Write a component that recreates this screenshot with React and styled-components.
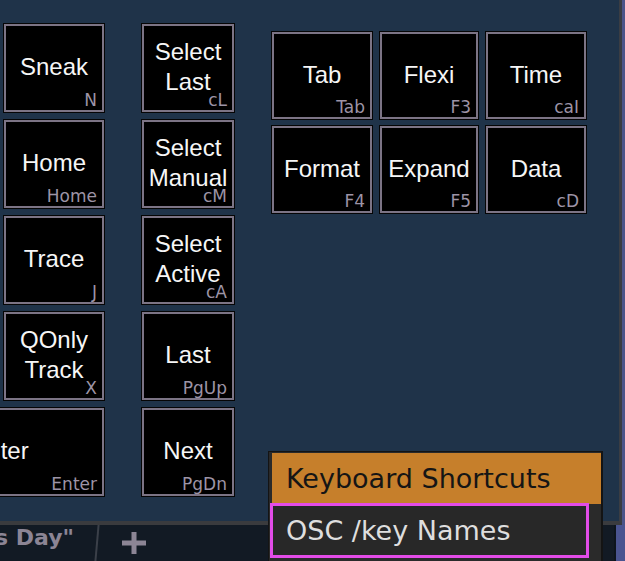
import React from "react";
import styled, { createGlobalStyle } from "styled-components";

const GlobalStyle = createGlobalStyle`
  html, body { margin: 0; padding: 0; }
  body {
    width: 625px;
    height: 561px;
    overflow: hidden;
    background: #121a24;
  }
  * { box-sizing: border-box; }
`;

const Screen = styled.div`
  position: relative;
  width: 625px;
  height: 561px;
  overflow: hidden;
  display: flex;
  flex-direction: column;
  background: #121a24;
`;

const TopRow = styled.div`
  display: flex;
  height: 525px;
`;

const Panel = styled.div`
  width: 622px;
  height: 525px;
  background: #1f3349;
  border-right: 3px solid #3a3d43;
  border-bottom: 4px solid #3a3b3e;
  overflow: hidden;
  display: flex;
  align-items: flex-start;
  padding-top: 24px;
`;

const SideStrip = styled.div`
  flex: 1;
  background: #4b5489;
`;

const LeftGrid = styled.div`
  flex-shrink: 0;
  margin-left: -104px;
  display: grid;
  grid-template-columns: 100px 100px 22px 92px;
  grid-auto-rows: 88px;
  column-gap: 8px;
  row-gap: 8px;
`;

const RightGrid = styled.div`
  flex-shrink: 0;
  margin-left: 38px;
  margin-top: 8px;
  display: grid;
  grid-template-columns: 100px 98px 100px;
  grid-auto-rows: 87px;
  column-gap: 8px;
  row-gap: 7px;
`;

const Key = styled.div`
  position: relative;
  grid-column: ${(p) => (p.$col ? `${p.$col} / span ${p.$span || 1}` : "auto")};
  grid-row: ${(p) => p.$row || "auto"};
  background: #000;
  border: 2px solid #7c7485;
  outline: 1px solid #050505;
  display: flex;
  align-items: center;
  justify-content: center;
  padding-bottom: 2px;
`;

const KeyLabel = styled.span`
  font-family: "Liberation Sans", Arial, sans-serif;
  font-size: 24px;
  line-height: 30px;
  color: #f6f6f6;
  text-align: center;
  white-space: pre-line;
`;

const KeyShortcut = styled.span`
  position: absolute;
  right: 5px;
  bottom: 1px;
  font-family: "DejaVu Sans", sans-serif;
  font-size: 17px;
  line-height: 1;
  color: #9d94a6;
`;

const TabBar = styled.div`
  height: 36px;
  display: flex;
  align-items: stretch;
  background: #121a24;
`;

const TabCell = styled.div`
  width: 96px;
  flex-shrink: 0;
  overflow: hidden;
  display: flex;
  justify-content: flex-end;
  align-items: flex-start;
  padding-right: 22px;
  padding-top: 1px;
`;

const TabText = styled.span`
  flex-shrink: 0;
  white-space: nowrap;
  font-family: "DejaVu Sans", sans-serif;
  font-weight: bold;
  font-size: 22px;
  line-height: 24px;
  color: #8c8595;
`;

const TabDivider = styled.div`
  width: 2px;
  flex-shrink: 0;
  background: #3b4049;
  transform: skewX(-5deg);
`;

const AddTab = styled.div`
  margin-left: 24px;
  padding-top: 7px;
  display: flex;
  align-items: flex-start;
`;

const Spacer = styled.div`
  flex: 1;
`;

const TabEdge = styled.div`
  width: 11px;
  background: #4a5490;
  border-left: 2px solid #0d141c;
`;

const Menu = styled.div`
  position: absolute;
  left: 268px;
  top: 451px;
  width: 335px;
  height: 112px;
  background: #2a2a2a;
  border: 1px solid #141414;
  border-right-width: 2px;
  padding: 1px 0 0 3px;
  display: flex;
  flex-direction: column;
`;

const MenuItem = styled.div`
  font-family: "DejaVu Sans", sans-serif;
  font-size: 27px;
  display: flex;
  align-items: center;
  white-space: nowrap;
  ${(p) =>
    p.$active
      ? `
    height: 51px;
    background: #c67f2b;
    color: #151515;
    padding-left: 14px;
  `
      : ""}
  ${(p) =>
    p.$focused
      ? `
    margin-left: -2px;
    margin-top: -1px;
    width: 319px;
    height: 55px;
    background: #282828;
    border: 3px solid #e34ce8;
    color: #dedede;
    padding-left: 13px;
  `
      : ""}
`;

const leftKeys = [
  { label: "Sneak", sc: "N", col: 2, row: 1 },
  { label: "Home", sc: "Home", col: 2, row: 2 },
  { label: "Trace", sc: "J", col: 2, row: 3 },
  { label: "QOnly\nTrack", sc: "X", col: 2, row: 4 },
  { label: "Enter", sc: "Enter", col: 1, span: 2, row: 5 },
  { label: "Select\nLast", sc: "cL", col: 4, row: 1 },
  { label: "Select\nManual", sc: "cM", col: 4, row: 2 },
  { label: "Select\nActive", sc: "cA", col: 4, row: 3 },
  { label: "Last", sc: "PgUp", col: 4, row: 4 },
  { label: "Next", sc: "PgDn", col: 4, row: 5 },
];

const rightKeys = [
  { label: "Tab", sc: "Tab" },
  { label: "Flexi", sc: "F3" },
  { label: "Time", sc: "caI" },
  { label: "Format", sc: "F4" },
  { label: "Expand", sc: "F5" },
  { label: "Data", sc: "cD" },
];

function PlusIcon() {
  return (
    <svg width="24" height="22" viewBox="0 0 24 22">
      <rect x="0" y="8.5" width="24" height="5" fill="#8c8595" />
      <rect x="9.5" y="0" width="5" height="22" fill="#8c8595" />
    </svg>
  );
}

export default function App() {
  return (
    <>
      <GlobalStyle />
      <Screen>
        <TopRow>
          <Panel>
            <LeftGrid>
              {leftKeys.map((k) => (
                <Key key={k.label} $col={k.col} $span={k.span} $row={k.row}>
                  <KeyLabel>{k.label}</KeyLabel>
                  <KeyShortcut>{k.sc}</KeyShortcut>
                </Key>
              ))}
            </LeftGrid>
            <RightGrid>
              {rightKeys.map((k) => (
                <Key key={k.label}>
                  <KeyLabel>{k.label}</KeyLabel>
                  <KeyShortcut>{k.sc}</KeyShortcut>
                </Key>
              ))}
            </RightGrid>
          </Panel>
          <SideStrip />
        </TopRow>
        <TabBar>
          <TabCell>
            <TabText>"Today's Day"</TabText>
          </TabCell>
          <TabDivider />
          <AddTab>
            <PlusIcon />
          </AddTab>
          <Spacer />
          <TabEdge />
        </TabBar>
        <Menu>
          <MenuItem $active>Keyboard Shortcuts</MenuItem>
          <MenuItem $focused>OSC /key Names</MenuItem>
        </Menu>
      </Screen>
    </>
  );
}
